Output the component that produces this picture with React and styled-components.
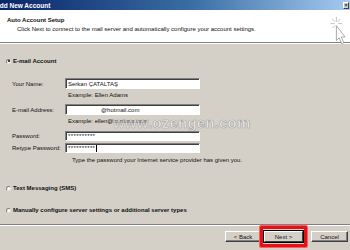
import React from "react";
import styled, { createGlobalStyle } from "styled-components";

const GlobalStyle = createGlobalStyle`
  html, body { margin: 0; padding: 0; background: #d4d0c8; }
  * { box-sizing: border-box; }
`;

const Window = styled.div`
  position: relative;
  width: 350px;
  height: 250px;
  overflow: hidden;
  display: flex;
  flex-direction: column;
  background: #d4d0c8;
  font-family: "Liberation Sans", Arial, sans-serif;
  font-size: 6px;
  color: #111;
`;

const TitleBar = styled.div`
  height: 10px;
  display: flex;
  align-items: center;
  justify-content: space-between;
  padding-right: 1px;
  background: linear-gradient(to right, #0a246a 0%, #3a6ea5 55%, #a6caf0 100%);
  overflow: hidden;
`;

const Title = styled.span`
  margin-left: -5px;
  color: #fff;
  font-weight: bold;
  font-size: 6.5px;
  white-space: nowrap;
`;

const CloseBox = styled.div`
  width: 6px;
  height: 7px;
  display: flex;
  align-items: center;
  justify-content: center;
  background: #d4d0c8;
  border-top: 1px solid #fff;
  border-left: 1px solid #fff;
  border-right: 1px solid #404040;
  border-bottom: 1px solid #404040;
  font-size: 5px;
  line-height: 1;
  font-weight: bold;
`;

const Header = styled.div`
  height: 33px;
  display: flex;
  justify-content: space-between;
  padding: 6px 3px 0 7px;
  background: #fff;
  border-bottom: 1px solid #808080;
  box-shadow: 0 1px 0 #fff;
`;

const HeaderText = styled.div`
  display: flex;
  flex-direction: column;
  gap: 1px;
`;

const Heading = styled.div`
  font-weight: bold;
  line-height: 8px;
`;

const SubHeading = styled.div`
  padding-left: 10px;
  line-height: 8px;
  white-space: nowrap;
`;

const Body = styled.div`
  flex: 1;
  display: flex;
  flex-direction: column;
  padding: 14px 0 0 6px;
`;

const OptionRow = styled.div`
  height: 8px;
  display: flex;
  align-items: center;
  gap: 2px;
  margin-top: ${(p) => p.$top || 0}px;
  font-weight: bold;
  white-space: nowrap;
`;

const Radio = styled.span`
  position: relative;
  width: 5px;
  height: 5px;
  border-radius: 50%;
  background: #fff;
  border: 1px solid #808080;
  border-right-color: #e0e0e0;
  border-bottom-color: #e0e0e0;
  &::after {
    content: "";
    display: ${(p) => (p.$checked ? "block" : "none")};
    position: absolute;
    left: 0.5px;
    top: 0.5px;
    width: 2px;
    height: 2px;
    border-radius: 50%;
    background: #000;
  }
`;

const Form = styled.div`
  margin: 13px 0 0 6px;
  display: grid;
  grid-template-columns: 53px 135px;
`;

const Label = styled.div`
  height: ${(p) => p.$h || 11}px;
  display: flex;
  align-items: center;
  margin-top: ${(p) => p.$top || 0}px;
  white-space: nowrap;
`;

const Field = styled.div`
  height: ${(p) => p.$h || 11}px;
  margin-top: ${(p) => p.$top || 0}px;
  display: flex;
  align-items: center;
  padding-left: ${(p) => p.$indent || 2}px;
  background: #fff;
  border-top: 1px solid #808080;
  border-left: 1px solid #808080;
  border-right: 1px solid #fff;
  border-bottom: 1px solid #fff;
  box-shadow: inset 1px 1px 0 #404040;
  white-space: nowrap;
  letter-spacing: ${(p) => p.$spacing || 0}px;
`;

const Caret = styled.span`
  display: inline-block;
  width: 1px;
  height: 7px;
  margin-left: 1px;
  background: #000;
`;

const Hint = styled.div`
  grid-column: 2;
  height: ${(p) => p.$h || 11}px;
  display: flex;
  align-items: center;
  padding-left: ${(p) => p.$indent || 3}px;
  white-space: nowrap;
`;

const Spacer = styled.div`
  flex: 1;
`;

const Footer = styled.div`
  height: 26px;
  display: flex;
  justify-content: flex-end;
  align-items: center;
  padding: 0 2px 2px 0;
  border-top: 1px solid #808080;
  box-shadow: inset 0 1px 0 #fff;
`;

const Button = styled.div`
  width: ${(p) => p.$w || 37}px;
  height: 11px;
  display: flex;
  align-items: center;
  justify-content: center;
  background: #d4d0c8;
  border: 1px solid #fff;
  border-right-color: #404040;
  border-bottom-color: #404040;
  box-shadow: ${(p) => (p.$default ? "0 0 0 1px #000" : "inset -1px -1px 0 #808080")};
  margin-left: ${(p) => p.$gap || 0}px;
`;

const Highlight = styled.div`
  margin-left: -1px;
  padding: 2px 1px;
  display: flex;
  border: 3px solid #e4111b;
  border-radius: 1px;
  box-shadow: 0 0 0 1px #ff5c5c;
`;

const Watermark = styled.div`
  position: absolute;
  left: 113px;
  top: 114px;
  font-family: "Liberation Sans", Arial, sans-serif;
  font-weight: bold;
  font-size: 15px;
  letter-spacing: 0.2px;
  color: rgba(255, 255, 255, 0.6);
  -webkit-text-stroke: 0.7px rgba(130, 130, 130, 0.6);
  pointer-events: none;
  white-space: nowrap;
`;

const SetupIcon = () => (
  <svg width="17" height="30" viewBox="0 0 16 28">
    <g stroke="#b8b8b8" strokeWidth="0.8" strokeLinecap="round">
      <line x1="6" y1="1" x2="6" y2="5" />
      <line x1="1" y1="7" x2="4" y2="7" />
      <line x1="8" y1="7" x2="11" y2="7" />
      <line x1="2.5" y1="3" x2="4.5" y2="5" />
      <line x1="9.5" y1="3" x2="7.5" y2="5" />
      <line x1="2.5" y1="11" x2="4.5" y2="9" />
    </g>
    <path
      d="M6 9 L6 23 L8.6 20.4 L11 26 L13 25 L10.6 19.6 L14.2 19.6 Z"
      fill="#fff"
      stroke="#9a9a9a"
      strokeWidth="0.8"
      strokeLinejoin="round"
    />
  </svg>
);

export default function App() {
  return (
    <Window>
      <GlobalStyle />
      <TitleBar>
        <Title>Add New Account</Title>
        <CloseBox>×</CloseBox>
      </TitleBar>
      <Header>
        <HeaderText>
          <Heading>Auto Account Setup</Heading>
          <SubHeading>
            Click Next to connect to the mail server and automatically configure your account settings.
          </SubHeading>
        </HeaderText>
        <SetupIcon />
      </Header>
      <Body>
        <OptionRow>
          <Radio $checked />
          E-mail Account
        </OptionRow>
        <Form>
          <Label>Your Name:</Label>
          <Field>Serkan ÇATALTAŞ</Field>
          <Hint>Example: Ellen Adams</Hint>
          <Label $top={4}>E-mail Address:</Label>
          <Field $top={4} $indent={35}>@hotmail.com</Field>
          <Hint>Example: ellen@contoso.com</Hint>
          <Label $top={5} $h={10}>Password:</Label>
          <Field $top={5} $h={10} $spacing={0.4}>**********</Field>
          <Label $top={2} $h={10}>Retype Password:</Label>
          <Field $top={2} $h={10} $spacing={0.4}>
            **********
            <Caret />
          </Field>
          <Hint $h={14} $indent={7}>
            Type the password your Internet service provider has given you.
          </Hint>
        </Form>
        <OptionRow $top={17}>
          <Radio />
          Text Messaging (SMS)
        </OptionRow>
        <OptionRow $top={14}>
          <Radio />
          Manually configure server settings or additional server types
        </OptionRow>
        <Spacer />
      </Body>
      <Footer>
        <Button $w={36}>&lt; Back</Button>
        <Highlight>
          <Button $w={39} $default>
            Next &gt;
          </Button>
        </Highlight>
        <Button $gap={4}>Cancel</Button>
      </Footer>
      <Watermark>www.ozengen.com</Watermark>
    </Window>
  );
}
